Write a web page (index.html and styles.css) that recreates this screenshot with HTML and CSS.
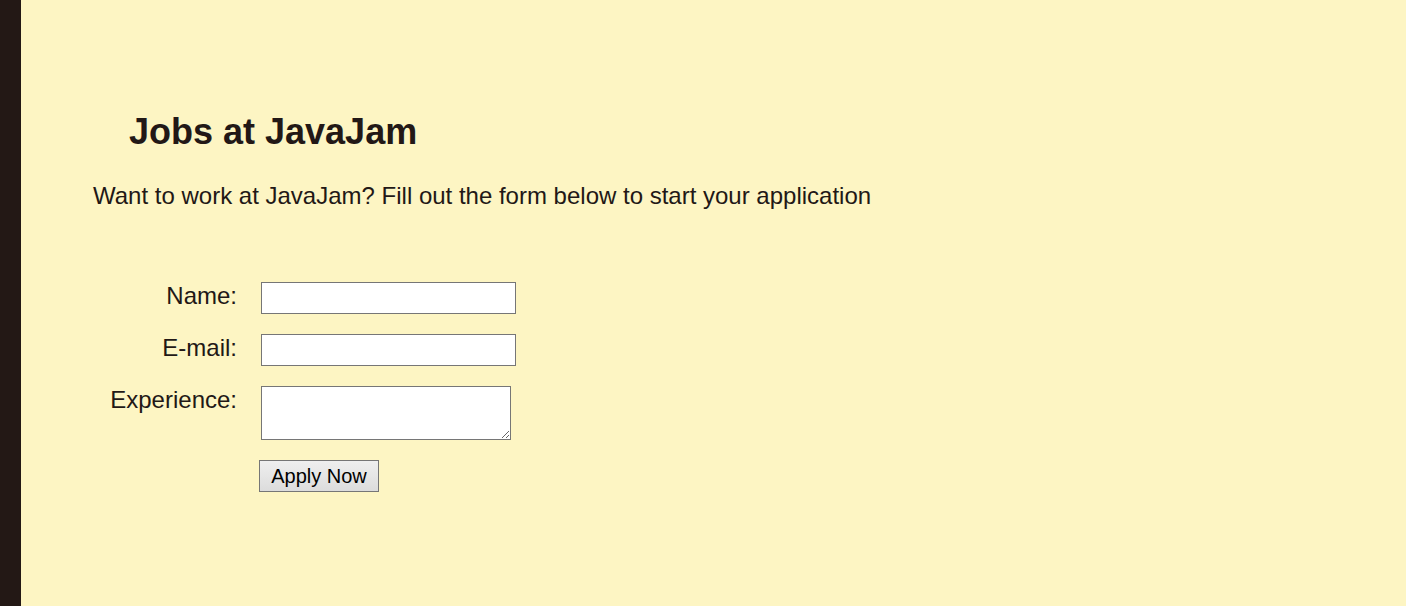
FILE: index.html
```html
<!DOCTYPE html>
<html lang="en">
<head>
<meta charset="utf-8">
<title>Jobs at JavaJam</title>
<link rel="stylesheet" href="styles.css">
</head>
<body>
<div class="page">
  <div class="strip"></div>
  <main class="content">
    <h2 class="title">Jobs at JavaJam</h2>
    <p class="intro">Want to work at JavaJam? Fill out the form below to start your application</p>
    <form class="jobform">
      <label class="lbl" for="myName">Name:</label>
      <input class="field" type="text" id="myName" name="myName">
      <label class="lbl" for="myEmail">E-mail:</label>
      <input class="field" type="email" id="myEmail" name="myEmail">
      <label class="lbl" for="myExperience">Experience:</label>
      <textarea class="area" id="myExperience" name="myExperience"></textarea>
      <span class="spacer"></span>
      <div class="actions"><button class="btn" type="submit">Apply Now</button></div>
    </form>
  </main>
</div>
</body>
</html>
```
FILE: styles.css
```css
html, body {
  margin: 0;
  padding: 0;
  height: 100%;
}
body {
  background: #fdf5c3;
  color: #221816;
  font-family: "Liberation Sans", Arial, sans-serif;
  font-size: 24px;
}
.page {
  display: flex;
  min-height: 100%;
}
.strip {
  width: 21px;
  flex: none;
  background: #231815;
}
.content {
  flex: 1;
  padding: 111px 0 0 72px;
}
.title {
  margin: 0 0 0 36px;
  font-size: 36px;
  font-weight: bold;
  line-height: normal;
}
.intro {
  margin: 29px 0 0 0;
  font-size: 24px;
  line-height: normal;
}
.jobform {
  margin-top: 72px;
  display: grid;
  grid-template-columns: 144px auto;
  column-gap: 24px;
  row-gap: 20px;
  justify-content: start;
  align-items: start;
}
.lbl {
  text-align: right;
  line-height: normal;
  font-size: 24px;
}
.field {
  box-sizing: border-box;
  width: 255px;
  height: 32px;
  margin: 0;
  border: 1px solid #767676;
  background: #fff;
  font-size: 20px;
}
.area {
  box-sizing: border-box;
  width: 250px;
  height: 54px;
  margin: 0;
  border: 1px solid #767676;
  background: #fff;
  font-size: 20px;
}
.actions {
  margin-left: -2px;
}
.btn {
  box-sizing: border-box;
  width: 120px;
  height: 32px;
  margin: 0;
  padding: 0;
  border: 1px solid #767676;
  background: linear-gradient(#efefef, #dcdcdc);
  color: #000;
  font-family: "Liberation Sans", Arial, sans-serif;
  font-size: 20px;
}
```
